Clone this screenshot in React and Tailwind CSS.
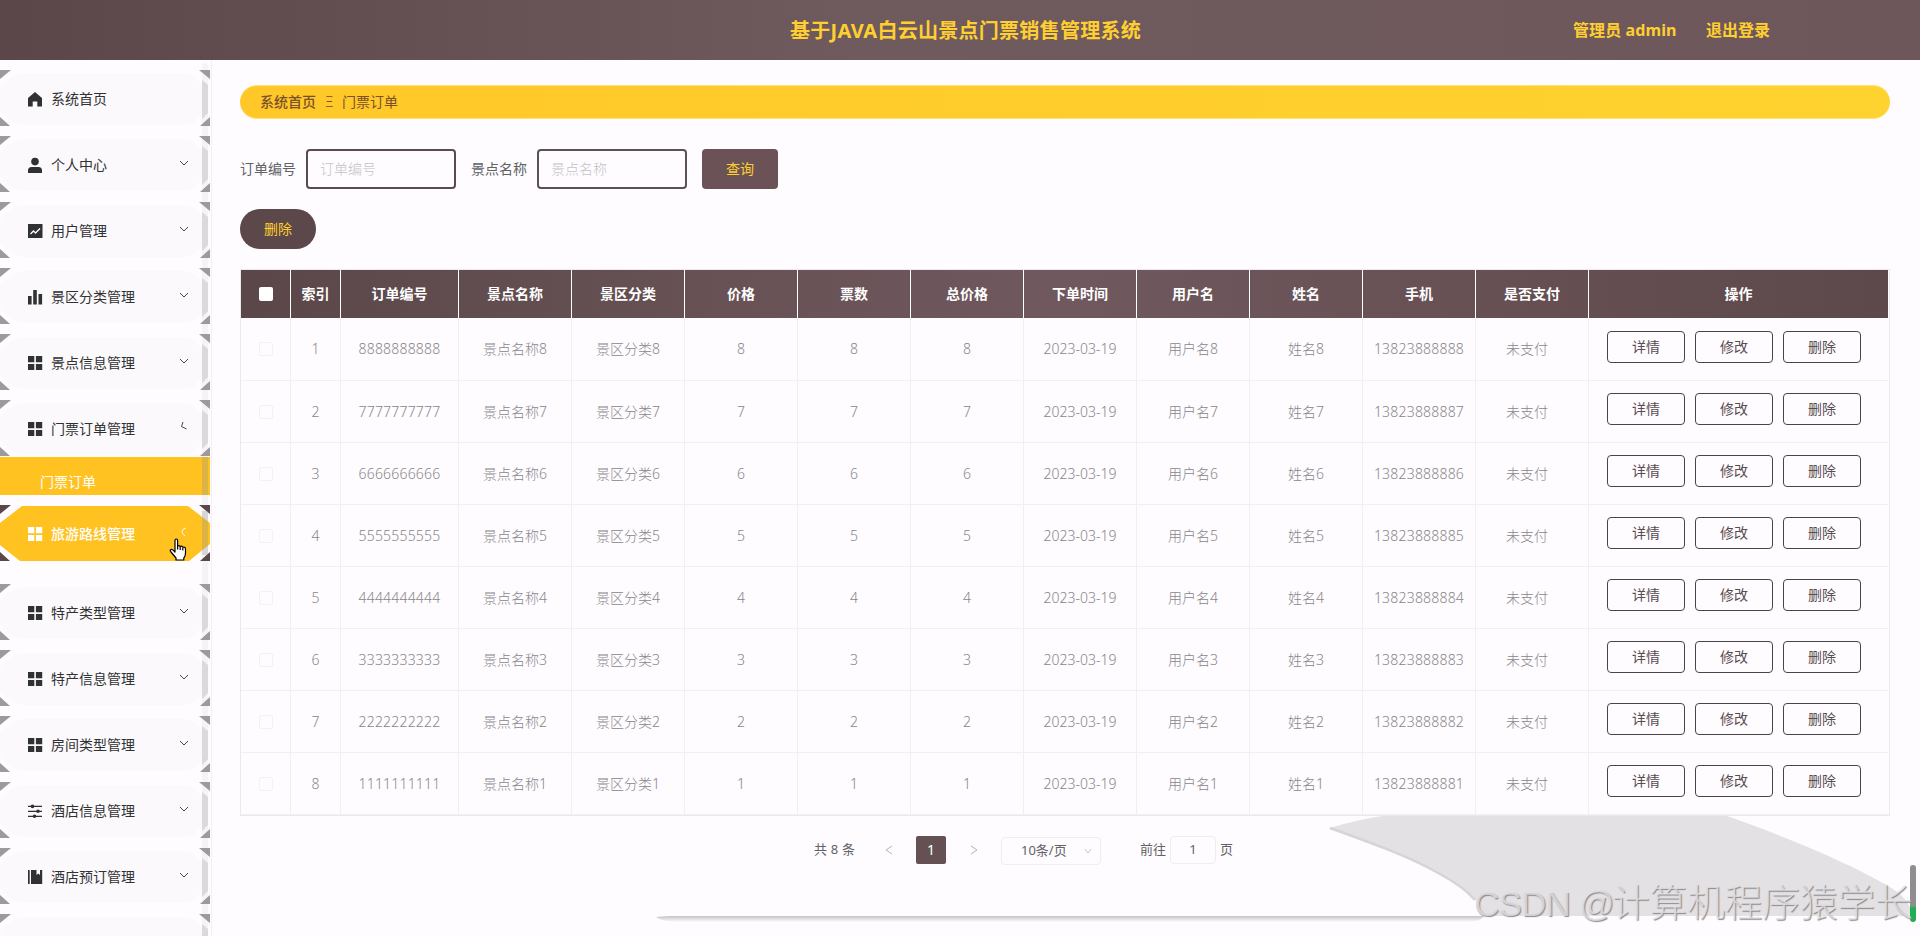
import React from "react"

const menus = [
  { name: "系统首页", icon: "home", arrow: "" },
  { name: "个人中心", icon: "user", arrow: "down" },
  { name: "用户管理", icon: "trend", arrow: "down" },
  { name: "景区分类管理", icon: "bars", arrow: "down" },
  { name: "景点信息管理", icon: "grid", arrow: "down" },
  { name: "门票订单管理", icon: "grid", arrow: "opening", child: "门票订单" },
  { name: "旅游路线管理", icon: "grid", arrow: "closing", active: true },
  { name: "特产类型管理", icon: "grid", arrow: "down" },
  { name: "特产信息管理", icon: "grid", arrow: "down" },
  { name: "房间类型管理", icon: "grid", arrow: "down" },
  { name: "酒店信息管理", icon: "sliders", arrow: "down" },
  { name: "酒店预订管理", icon: "book", arrow: "down" },
  { name: "", icon: "", arrow: "" },
]

const columns = [
  "索引",
  "订单编号",
  "景点名称",
  "景区分类",
  "价格",
  "票数",
  "总价格",
  "下单时间",
  "用户名",
  "姓名",
  "手机",
  "是否支付",
  "操作",
]

const orders = [8, 7, 6, 5, 4, 3, 2, 1].map((n, i) => ({
  index: i + 1,
  code: String(n).repeat(10),
  spot: "景点名称" + n,
  type: "景区分类" + n,
  price: n,
  count: n,
  total: n,
  date: "2023-03-19",
  user: "用户名" + n,
  name: "姓名" + n,
  phone: "1382388888" + n,
}))

function MenuIcon({ name }) {
  const paths = {
    home: <path d="M7 0 0 6v8.500h4.700V9.500h4.600v5H14V6z" />,
    user: (
      <>
        <circle cx="7" cy="3.600" r="3.800" />
        <path d="M0 15v-2.500Q0 9 3.500 9h7Q14 9 14 12.500V15z" />
      </>
    ),
    trend: (
      <>
        <path d="M0 0h14.500v14H0z" />
        <path
          d="M2.500 10 5.500 7 7.500 9 12 4.500"
          fill="none"
          stroke="#fff"
          strokeWidth="1.300"
        />
      </>
    ),
    bars: <path d="M0 6h3.600v8.500H0zM5.200 0h3.600v14.500H5.200zM10.500 4h3.600v10.500h-3.600z" />,
    grid: (
      <path d="M0 0h6.300v6.200H0zM7.900 0h6.300v6.200H7.900zM0 7.900h6.300V14H0zM7.900 7.900h6.300V14H7.900z" />
    ),
    sliders: (
      <>
        <path d="M0 1.800h14v1.200H0zM0 6.700h14v1.200H0zM0 11.700h14v1.200H0z" />
        <circle cx="4.500" cy="2.400" r="1.800" />
        <circle cx="10" cy="7.300" r="1.800" />
        <circle cx="6.500" cy="12.300" r="1.800" />
      </>
    ),
    book: <path d="M0 0h1.700v14H0zM3 0h5.500v5l1.800-1.600L12 5V0h2.200v14H3z" />,
  }
  return (
    <svg
      className="h-[15px] w-[15px] shrink-0 overflow-visible"
      viewBox="0 0 15 15"
      fill="currentColor"
    >
      {paths[name]}
    </svg>
  )
}

function Arrow({ type }) {
  if (!type) return null
  const d = {
    down: "M1 3l4 4 4-4",
    opening: "M4 0 2.500 4.500 7.500 7",
    closing: "M7 1Q3 2 3 4.500T6 9",
  }
  return (
    <svg
      className="mb-[5px] h-[10px] w-[10px]"
      viewBox="0 0 10 10"
      fill="none"
      stroke="currentColor"
      strokeWidth="0.900"
    >
      <path d={d[type]} />
    </svg>
  )
}

function Shape({ active }) {
  return (
    <svg
      className="absolute inset-0 h-14 w-[210px]"
      viewBox="0 0 210 56"
      preserveAspectRatio="none"
    >
      <path
        d="M0 0h11L0 9zM199 0h11v9zM0 47l10 9H0zM210 47v9h-10z"
        fill={active ? "#5b464a" : "#9d999d"}
      />
      <path
        d={
          active
            ? "M22 1h166l22 17v21l-21 17H20L0 40V18z"
            : "M22 3h166q8 3 14 12v28q-6 9-14 12H22Q8 52 0 40V18Q8 6 22 3z"
        }
        fill={active ? "#ffc220" : "#fbf9fc"}
      />
      {!active && <path d="M202 10l6 5v28l-6 6z" fill="#dbd9dc" />}
    </svg>
  )
}

function Sidebar() {
  return (
    <div className="relative h-[876px] w-[212px] shrink-0 overflow-hidden border-r border-[#f2f0f3] pt-[10px]">
      <div className="absolute left-[202px] top-[3px] h-full w-[6px] rounded-full bg-[#f5f3f6]"></div>
      {menus.map((menu, i) => (
        <div key={i}>
          <div
            className={
              "relative h-14 w-[210px] " +
              (menu.active
                ? "mb-[23px] text-white"
                : menu.child
                  ? "text-[#303133]"
                  : "mb-[10px] text-[#303133]")
            }
          >
            <Shape active={menu.active} />
            {menu.name && (
              <div className="relative flex h-full items-center pl-7 pr-[21px] pt-[2px]">
                <MenuIcon name={menu.icon} />
                <span className={"-mt-px ml-2 flex-1 text-sm " + (menu.active ? "font-medium" : "")}>
                  {menu.name}
                </span>
                <Arrow type={menu.arrow} />
              </div>
            )}
          </div>
          {menu.child && (
            <div className="relative mb-[10px] mt-px flex h-[38px] w-[210px] items-center bg-[#ffc220] pl-10 pt-3 text-sm text-white">
              {menu.child}
            </div>
          )}
        </div>
      ))}
      <div className="absolute left-[202px] top-[397px] h-[38px] w-[6px] bg-[#909399]/30"></div>
      <div className="absolute left-[202px] top-[451px] h-[44px] w-[6px] bg-[#909399]/30"></div>
      <svg
        className="absolute left-[169px] top-[478px] h-[23px] w-[19px]"
        viewBox="0 0 19 23"
        fill="#fff"
        stroke="#000"
        strokeWidth="1.200"
        strokeLinejoin="round"
      >
        <path d="M6 14V2.500Q6 1 7.300 1T8.600 2.500V8q1.500-1 2.500.5 1.800-.8 2.600.8 2.600-.8 2.800 1.700v4q0 3-1.700 5v2H7v-2L2 14q-1.500-2 0-2.500T6 14z" />
        <path d="M8.600 8v3.500M11.200 9v3M13.800 10v2.500" />
      </svg>
    </div>
  )
}

function SearchForm() {
  return (
    <div>
      <div className="mt-[30px] flex h-10 items-center text-sm text-[#606266]">
        <label>订单编号</label>
        <input
          className="ml-[10px] mr-[15px] h-10 w-[150px] rounded border-2 border-[#5b4a4e] px-3 pb-0.5 placeholder:font-light placeholder:text-[#c4c2c8]"
          placeholder="订单编号"
        />
        <label>景点名称</label>
        <input
          className="ml-[10px] mr-[15px] h-10 w-[150px] rounded border-2 border-[#5b5054] px-3 pb-0.5 placeholder:font-light placeholder:text-[#c4c2c8]"
          placeholder="景点名称"
        />
        <button className="h-10 w-[76px] rounded bg-[#6a5257] text-[#ffd02c]">
          查询
        </button>
      </div>
      <button className="mt-5 h-10 w-[76px] rounded-full bg-[#5c474a] text-sm text-[#ffd02c]">
        删除
      </button>
    </div>
  )
}

function OrderTable() {
  const td = "border-b border-r border-[#f1eff2] text-center"
  return (
    <div className="mt-5 w-[1650px] border border-[#ebe9ec] pr-px">
      <table className="w-[1647px] table-fixed border-separate border-spacing-0 text-sm">
        <colgroup>
          <col className="w-[50px]" />
          <col className="w-[50px]" />
          <col className="w-[118px]" />
          {columns.slice(2, 12).map((c) => (
            <col key={c} className="w-[113px]" />
          ))}
          <col className="w-[299px]" />
        </colgroup>
        <thead>
          <tr className="bg-linear-to-r from-[#5b474a] via-[#70595e] to-[#5d484b] text-white">
            <th className="h-12 border-r border-white">
              <div className="mx-auto size-[14px] rounded-xs bg-white"></div>
            </th>
            {columns.map((c, i) => (
              <th
                key={c}
                className={"p-0 font-bold " + (i < 12 ? "border-r border-white" : "")}
              >
                {c}
              </th>
            ))}
          </tr>
        </thead>
        <tbody className="font-light text-[#88868a]">
          {orders.map((o) => (
            <tr key={o.index} className="h-[62px] first:h-[63px]">
              <td className={td}>
                <div className="mx-auto size-[14px] rounded-xs border border-[#f3f1f4]"></div>
              </td>
              {Object.keys(o).map((key) => (
                <td
                  key={key}
                  className={td + (key === "code" || key === "phone" ? " tracking-[0.2px]" : "")}
                >
                  {o[key]}
                </td>
              ))}
              <td className={td + " pr-[10px]"}>未支付</td>
              <td className="border-b border-[#f1eff2] pb-[5px] pl-[18px]">
                <div className="flex gap-[10px] font-normal text-[#5a4c50]">
                  {["详情", "修改", "删除"].map((b) => (
                    <button
                      key={b}
                      className="h-8 w-[78px] rounded border border-[#4a4448]"
                    >
                      {b}
                    </button>
                  ))}
                </div>
              </td>
            </tr>
          ))}
        </tbody>
      </table>
    </div>
  )
}

function Pagination() {
  return (
    <div className="mt-[19px] flex h-[30px] items-center pl-[574px] text-[13px] text-[#606266]">
      <span className="w-[71px] tracking-[0.2px]">共 8 条</span>
      <svg className="h-2.5 w-2" viewBox="0 0 8 10" fill="none" stroke="#b5b3b8">
        <path d="M7 1 1 5l6 4" />
      </svg>
      <span className="ml-[23px] flex h-7 w-[30px] items-center justify-center rounded-xs bg-[#655054] text-sm text-white">
        1
      </span>
      <svg className="ml-6 h-2.5 w-2" viewBox="0 0 8 10" fill="none" stroke="#b5b3b8">
        <path d="m1 1 6 4-6 4" />
      </svg>
      <div className="ml-[23px] mt-0.5 flex h-7 w-[100px] items-center rounded border border-[#efedf0] pb-px pl-[19px]">
        10条/页
        <svg className="ml-auto mr-2 h-2 w-2" viewBox="0 0 8 8" fill="none" stroke="#c8c6ca">
          <path d="m1 2 3 4 3-4" />
        </svg>
      </div>
      <span className="ml-[39px]">前往</span>
      <span className="ml-1 flex h-7 w-[46px] items-center justify-center rounded border border-[#efedf0]">
        1
      </span>
      <span className="ml-1">页</span>
    </div>
  )
}

// page backdrop: grey ribbon on the right and the soft line under the content
function Backdrop() {
  return (
    <svg
      className="absolute left-[650px] top-[815px] h-[121px] w-[1270px]"
      viewBox="650 815 1270 121"
    >
      <defs>
        <linearGradient id="line" x1="0" y1="0" x2="0" y2="1">
          <stop offset="0" stopColor="#c4c2c5" />
          <stop offset="1" stopColor="#fefcff" />
        </linearGradient>
      </defs>
      <path
        d="M1330 828Q1352 821 1382 816H1727C1790 838 1860 868 1893 889Q1908 898 1914 916H1484C1478 893 1452 880 1440 874C1410 857 1380 846 1330 828z"
        fill="#e3e1e4"
      />
      <path
        d="M1330 828C1380 846 1410 857 1440 874Q1464 887 1475 900"
        fill="none"
        stroke="#d6d4d7"
        strokeWidth="2.500"
      />
      <path d="M656 917.500Q660 916 670 916H1484Q1480 922 1468 922H675Q662 921 656 917.500z" fill="url(#line)" />
    </svg>
  )
}

export default function App() {
  return (
    <div className="relative h-[936px] w-[1920px] overflow-hidden bg-[#fefcff] font-['Noto_Sans','Noto_Sans_CJK_SC',sans-serif]">
      <header className="flex h-[60px] items-center bg-linear-to-r from-[#5b474a] via-[#6f5a5e] via-45% to-[#6d575b] font-bold text-[#ffcf30]">
        <h1 className="ml-[790px] mt-0.5 w-[352px] whitespace-nowrap text-xl tracking-[0.28px]">
          基于JAVA白云山景点门票销售管理系统
        </h1>
        <span className="ml-[431px] w-[133px] tracking-[0.1px]">管理员 admin</span>
        <span>退出登录</span>
      </header>
      <div className="flex">
        <Sidebar />
        <Backdrop />
        <main className="relative ml-7 w-[1650px] pt-[25px]">
          <div className="flex h-[34px] items-center rounded-full border-y border-[#ffe37a] bg-linear-to-r from-[#ffc828] to-[#ffd32f] pl-5 text-sm text-[#7a4f2b]">
            <span className="font-medium">系统首页</span>
            <span className="mx-[9px] w-2 font-light">Ξ</span>
            <span>门票订单</span>
          </div>
          <SearchForm />
          <OrderTable />
          <Pagination />
        </main>
      </div>
      <div className="absolute left-[1910px] top-[865px] h-[57px] w-[6px] rounded-full bg-linear-to-b from-[#8f8d91] from-70% to-[#1fae54] to-75%"></div>
      <div className="absolute left-[1474px] top-[876px] whitespace-nowrap font-['Liberation_Sans','Noto_Sans_CJK_SC',sans-serif] text-[37.600px] font-light leading-[54px] text-[#e6e4e7]/80 [text-shadow:1px_1px_1px_#8a888b]">
        <span className="inline-block w-[138px] whitespace-pre text-[35px] tracking-[-0.8px]">CSDN @</span>计算机程序猿学长
      </div>
    </div>
  )
}
